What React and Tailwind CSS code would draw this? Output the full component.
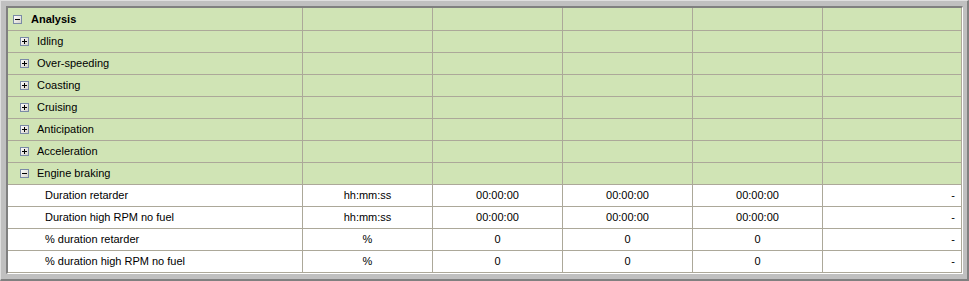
import React from 'react';

const groups = ['Idling', 'Over-speeding', 'Coasting', 'Cruising', 'Anticipation', 'Acceleration'];

const details = [
  { label: 'Duration retarder', unit: 'hh:mm:ss', v: '00:00:00' },
  { label: 'Duration high RPM no fuel', unit: 'hh:mm:ss', v: '00:00:00' },
  { label: '% duration retarder', unit: '%', v: '0' },
  { label: '% duration high RPM no fuel', unit: '%', v: '0' },
];

const Toggle = ({ open }) => (
  <svg width="9" height="9" viewBox="0 0 9 9" className="shrink-0">
    <defs>
      <linearGradient id={open ? 'gm' : 'gp'} x1="0" y1="0" x2="1" y2="1">
        <stop offset="0" stopColor="#ffffff" />
        <stop offset="1" stopColor="#d4d0c8" />
      </linearGradient>
    </defs>
    <rect x="0.5" y="0.5" width="8" height="8" fill={`url(#${open ? 'gm' : 'gp'})`} stroke="#7a8aa6" />
    <rect x="2" y="4" width="5" height="1" fill="#000" />
    {!open && <rect x="4" y="2" width="1" height="5" fill="#000" />}
  </svg>
);

const cell = 'border-r border-b border-[#aca899] flex items-center';

const GreenRow = ({ children, first }) => (
  <>
    <div className={`${cell} ${first ? 'h-[23px]' : 'h-[22px]'}`}>{children}</div>
    {[0, 1, 2, 3, 4].map((i) => (
      <div key={i} className={`${cell} ${first ? 'h-[23px]' : 'h-[22px]'}`} />
    ))}
  </>
);

const App = () => {
  return (
    <div
      className="w-[969px] h-[281px] bg-[#c0c0c0] border-t border-l border-[#dfdfdf] border-r-2 border-b-2 border-r-[#808080] border-b-[#808080] pt-[5px] pl-[5px] pr-[4px] pb-[5px] text-[11px] text-black"
      style={{ fontFamily: '"Liberation Sans", Arial, sans-serif' }}
    >
      <div className="border-t-2 border-l-2 border-[#808080] border-r border-b border-r-white border-b-white">
        <div className="grid grid-cols-[295px_130px_130px_130px_130px_139px]">
          <div className="contents bg-[#d0e4b5]" />
          {/* Analysis */}
          <div className="contents">
            <div className={`${cell} h-[23px] bg-[#d0e4b5] pl-[5px]`}>
              <Toggle open />
              <span className="ml-[9px] font-bold">Analysis</span>
            </div>
            {[0, 1, 2, 3, 4].map((i) => (
              <div key={i} className={`${cell} h-[23px] bg-[#d0e4b5]`} />
            ))}
          </div>
          {groups.map((g) => (
            <div key={g} className="contents">
              <div className={`${cell} h-[22px] bg-[#d0e4b5] pl-[12px]`}>
                <Toggle />
                <span className="ml-[8px]">{g}</span>
              </div>
              {[0, 1, 2, 3, 4].map((i) => (
                <div key={i} className={`${cell} h-[22px] bg-[#d0e4b5]`} />
              ))}
            </div>
          ))}
          <div className="contents">
            <div className={`${cell} h-[22px] bg-[#d0e4b5] pl-[12px]`}>
              <Toggle open />
              <span className="ml-[8px]">Engine braking</span>
            </div>
            {[0, 1, 2, 3, 4].map((i) => (
              <div key={i} className={`${cell} h-[22px] bg-[#d0e4b5]`} />
            ))}
          </div>
          {details.map((d) => (
            <div key={d.label} className="contents">
              <div className={`${cell} h-[22px] bg-white pl-[37px]`}>{d.label}</div>
              <div className={`${cell} h-[22px] bg-white justify-center`}>{d.unit}</div>
              <div className={`${cell} h-[22px] bg-white justify-center`}>{d.v}</div>
              <div className={`${cell} h-[22px] bg-white justify-center`}>{d.v}</div>
              <div className={`${cell} h-[22px] bg-white justify-center`}>{d.v}</div>
              <div className={`${cell} h-[22px] bg-white justify-end pr-[6px]`}>-</div>
            </div>
          ))}
        </div>
      </div>
    </div>
  );
};

export default App;
